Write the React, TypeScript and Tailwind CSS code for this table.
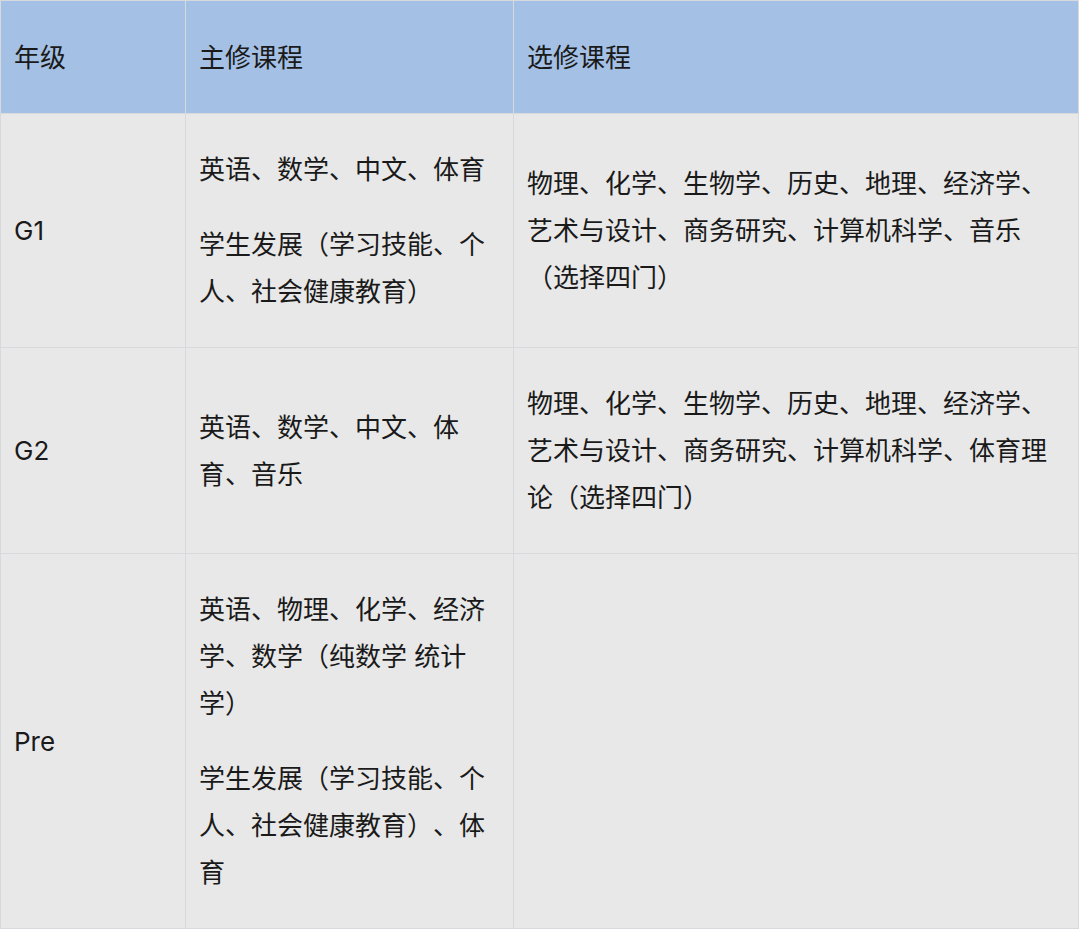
import React from "react";

type Row = { grade: string; major: string[]; elective: string[] };

const rows: Row[] = [
  {
    grade: "G1",
    major: ["英语、数学、中文、体育", "学生发展（学习技能、个人、社会健康教育）"],
    elective: ["物理、化学、生物学、历史、地理、经济学、艺术与设计、商务研究、计算机科学、音乐（选择四门）"],
  },
  {
    grade: "G2",
    major: ["英语、数学、中文、体育、音乐"],
    elective: ["物理、化学、生物学、历史、地理、经济学、艺术与设计、商务研究、计算机科学、体育理论（选择四门）"],
  },
  {
    grade: "Pre",
    major: ["英语、物理、化学、经济学、数学（纯数学 统计学）", "学生发展（学习技能、个人、社会健康教育）、体育"],
    elective: [],
  },
];

function Cell({ items, head = false }: { items: string[]; head?: boolean }) {
  return (
    <div
      className={`flex flex-col justify-center gap-[28px] px-[13px] ${
        head ? "pt-[33px] pb-[32px] bg-[#a4c1e5]" : "py-8 bg-[#e8e8e8]"
      }`}
    >
      {items.map((t, i) => (
        <p key={i} className="leading-[47px]">
          {t}
        </p>
      ))}
    </div>
  );
}

export default function App() {
  return (
    <div
      className="w-[1080px] h-[931px] bg-white text-[#1a1a1a] text-[26px] [text-spacing-trim:space-all] [text-autospace:no-autospace]"
      style={{ fontFamily: '"Inter", "Noto Sans CJK SC", sans-serif' }}
    >
      <div className="grid grid-cols-[184px_327px_564px] gap-px bg-[#d7d9dc] p-px w-[1079px]">
        <Cell items={["年级"]} head />
        <Cell items={["主修课程"]} head />
        <Cell items={["选修课程"]} head />
        {rows.map((r) => (
          <React.Fragment key={r.grade}>
            <Cell items={[r.grade]} />
            <Cell items={r.major} />
            <Cell items={r.elective} />
          </React.Fragment>
        ))}
      </div>
    </div>
  );
}
